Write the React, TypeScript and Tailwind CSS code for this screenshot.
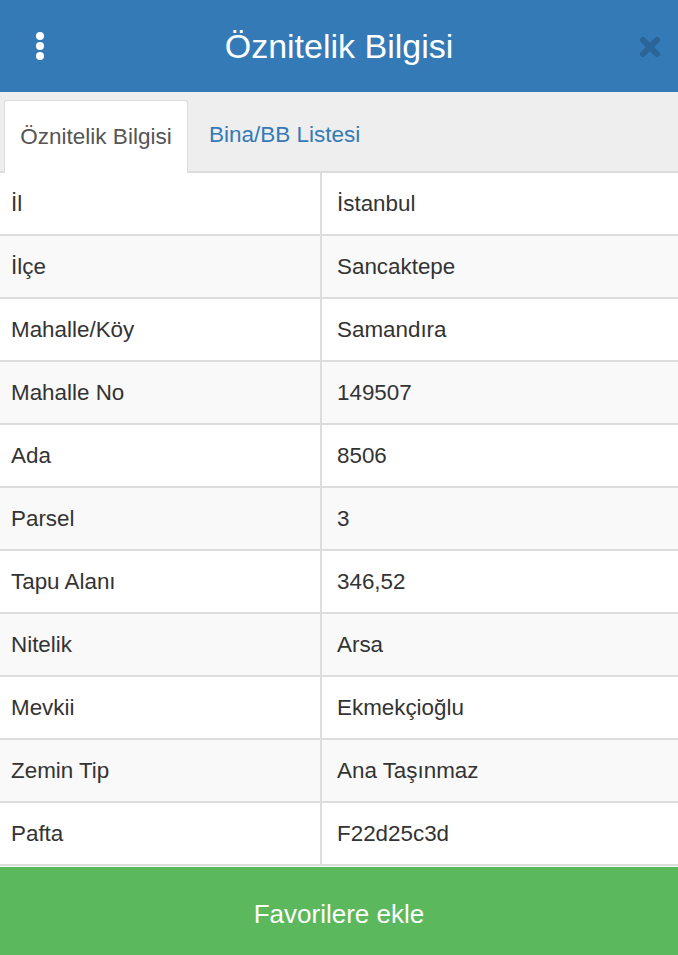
import React from 'react';

const rows: [string, string][] = [
  ['İl', 'İstanbul'],
  ['İlçe', 'Sancaktepe'],
  ['Mahalle/Köy', 'Samandıra'],
  ['Mahalle No', '149507'],
  ['Ada', '8506'],
  ['Parsel', '3'],
  ['Tapu Alanı', '346,52'],
  ['Nitelik', 'Arsa'],
  ['Mevkii', 'Ekmekçioğlu'],
  ['Zemin Tip', 'Ana Taşınmaz'],
  ['Pafta', 'F22d25c3d'],
];

const App: React.FC = () => {
  return (
    <div className="w-[678px] h-[955px] flex flex-col bg-white overflow-hidden font-['Liberation_Sans',Arial,sans-serif]">
      {/* header */}
      <div className="h-[92px] bg-[#337ab7] flex items-center justify-between px-[36px] relative">
        <div className="flex flex-col gap-[2px] items-center">
          <span className="w-[8px] h-[8px] rounded-full bg-white" />
          <span className="w-[8px] h-[8px] rounded-full bg-white" />
          <span className="w-[8px] h-[8px] rounded-full bg-white" />
        </div>
        <h1 className="text-white text-[34px] absolute left-0 right-0 text-center pointer-events-none">Öznitelik Bilgisi</h1>
        <svg width="24" height="24" viewBox="0 0 24 24" className="-mr-[20px] mt-[2px]">
          <path d="M5 5 L19 19 M19 5 L5 19" stroke="#2b6497" strokeWidth="6" strokeLinecap="round" />
        </svg>
      </div>

      {/* tabs */}
      <div className="h-[81px] bg-[#eeeeee] flex items-end pl-[4px] border-b-[2px] border-[#dddddd]">
        <div className="h-[73px] w-[184px] bg-white border border-b-0 border-[#dddddd] rounded-t-[3px] flex items-center justify-center text-[22.5px] text-[#555555] -mb-[2px]">
          Öznitelik Bilgisi
        </div>
        <div className="h-[73px] px-[21px] flex items-center text-[22.5px] text-[#337ab7]">Bina/BB Listesi</div>
      </div>

      {/* table */}
      <div className="flex-1 flex flex-col">
        {rows.map(([k, v], i) => (
          <div key={k} className={`flex h-[63px] border-b-[2px] border-[#dddddd] ${i % 2 === 1 ? 'bg-[#f9f9f9]' : 'bg-white'}`}>
            <div className="w-[322px] border-r-[2px] border-[#dddddd] flex items-center pl-[11px] text-[22.4px] text-[#333333]">{k}</div>
            <div className="flex-1 flex items-center pl-[15px] text-[22.4px] text-[#333333]">{v}</div>
          </div>
        ))}
      </div>

      {/* button */}
      <button className="h-[88px] pt-[6px] bg-[#5cb85c] text-white text-[26px] flex items-center justify-center shrink-0">
        Favorilere ekle
      </button>
    </div>
  );
};

export default App;
